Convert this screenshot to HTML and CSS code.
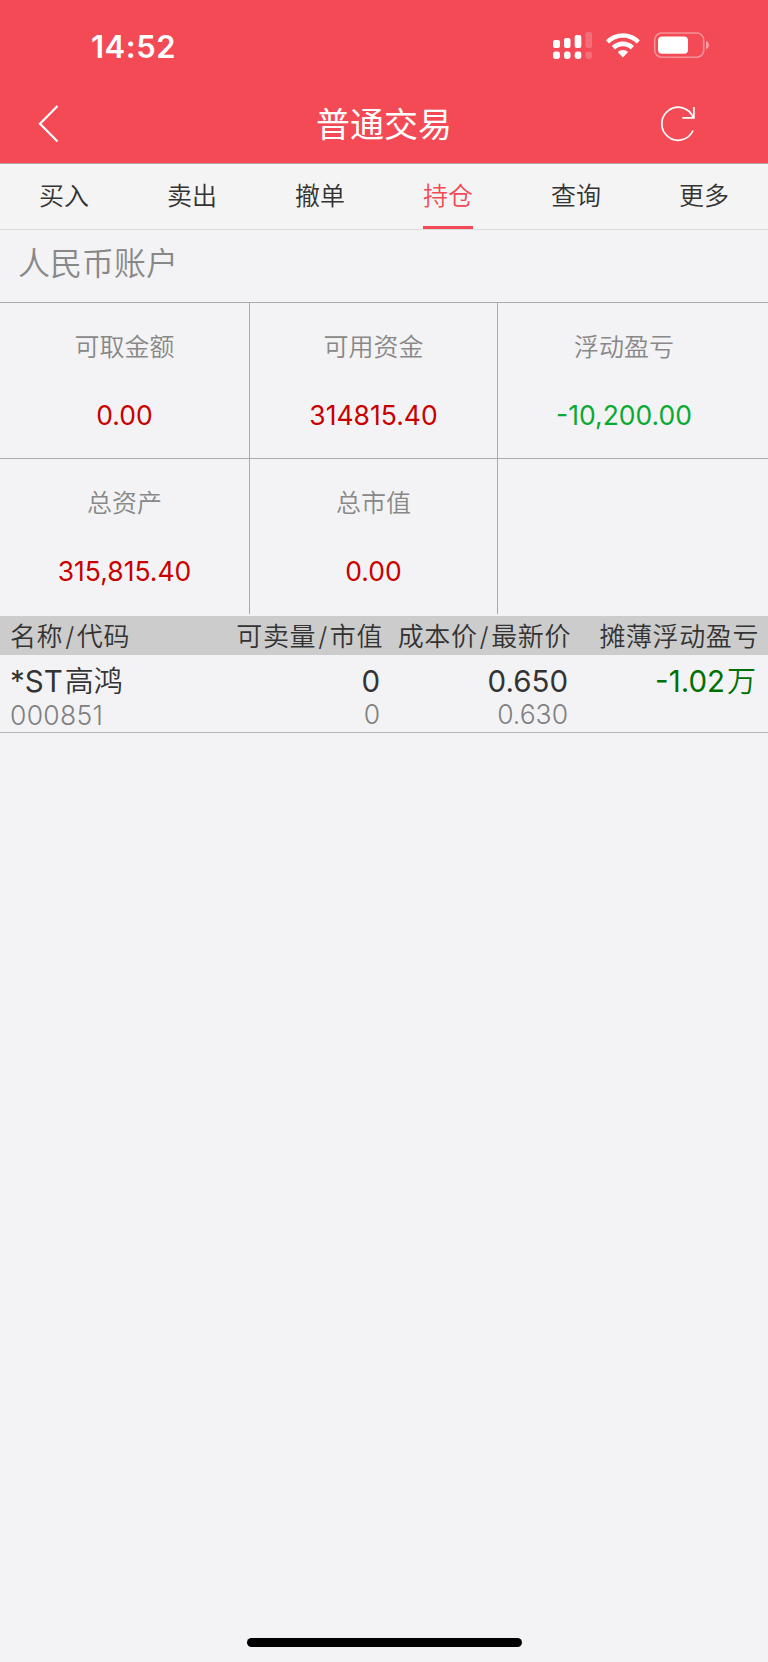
FILE: index.html
```html
<!DOCTYPE html>
<html lang="zh-CN">
<head>
    <meta charset="UTF-8">
    <meta name="viewport" content="width=device-width, initial-scale=1.0">
    <title>普通交易</title>
    <link rel="stylesheet" href="styles.css">
</head>
<body>
    <div class="page">
        <header class="header">
            <div class="status-bar">
                <span class="time">14:52</span>
                <svg class="status-icons" width="160" height="30" viewBox="0 0 160 30" fill="#fff">
                    <!-- signal -->
                    <rect x="1" y="10" width="7" height="8" rx="2"/>
                    <rect x="12" y="8" width="6.5" height="10" rx="2"/>
                    <rect x="22.7" y="5" width="6.6" height="13" rx="2"/>
                    <rect x="33.4" y="2" width="6.6" height="16" rx="2" opacity=".2"/>
                    <rect x="1" y="21.5" width="7" height="7.5" rx="2.4"/>
                    <rect x="12" y="21.5" width="6.5" height="7.5" rx="2.4"/>
                    <rect x="22.7" y="21.5" width="6.6" height="7.5" rx="2.4"/>
                    <rect x="33.4" y="21.5" width="6.6" height="7.5" rx="2.4" opacity=".2"/>
                    <!-- wifi -->
                    <path d="M53.9 10.2a24.3 24.3 0 0 1 34 0l-3.2 3.3a19.6 19.6 0 0 0-27.6 0z"/>
                    <path d="M59.8 16.1a15.8 15.8 0 0 1 22.2 0l-3.3 3.3a11.2 11.2 0 0 0-15.6 0z"/>
                    <path d="M65.7 22a7.6 7.6 0 0 1 10.4 0l-5.2 5.6z"/>
                    <!-- battery -->
                    <rect x="102.7" y="3" width="49" height="24.2" rx="7" fill="none" stroke="#fff" stroke-width="1.6" opacity=".4"/>
                    <rect x="106" y="6.6" width="30" height="17.2" rx="4"/>
                    <path d="M154 11c4 1.500 4 6.700 0 8.200z" opacity=".45"/>
                </svg>
            </div>
            <div class="nav-bar">
                <svg class="icon-back" width="24" height="40" viewBox="0 0 24 40" fill="none" stroke="#fff" stroke-width="2.2">
                    <path d="M20.500 2L3 19.800 20.500 37.500"/>
                </svg>
                <h1 class="title">普通交易</h1>
                <svg class="icon-refresh" width="38" height="38" viewBox="0 0 38 38" fill="none" stroke="#fff" stroke-width="1.7">
                    <path d="M34 25.500A16.300 16.500 0 1 1 34.200 12.500M34.900 2V12.800H23.300"/>
                </svg>
            </div>
        </header>

        <nav class="tabs">
            <a class="tab"><span>买入</span></a>
            <a class="tab"><span>卖出</span></a>
            <a class="tab"><span>撤单</span></a>
            <a class="tab active"><span>持仓</span></a>
            <a class="tab"><span>查询</span></a>
            <a class="tab"><span>更多</span></a>
        </nav>

        <h2 class="account">人民币账户</h2>

        <section class="summary">
            <div class="cell">
                <div class="label">可取金额</div>
                <div class="value">0.00</div>
            </div>
            <div class="cell">
                <div class="label">可用资金</div>
                <div class="value">314815.40</div>
            </div>
            <div class="cell">
                <div class="label">浮动盈亏</div>
                <div class="value down">-10,200.00</div>
            </div>
            <div class="cell">
                <div class="label">总资产</div>
                <div class="value">315,815.40</div>
            </div>
            <div class="cell">
                <div class="label">总市值</div>
                <div class="value">0.00</div>
            </div>
            <div class="cell"></div>
        </section>

        <section class="holdings">
            <div class="row head">
                <span>名称<i>/</i>代码</span>
                <span>可卖量<i>/</i>市值</span>
                <span>成本价<i>/</i>最新价</span>
                <span>摊薄浮动盈亏</span>
            </div>
            <div class="row stock">
                <div>
                    <p class="main">*ST<b>高鸿</b></p>
                    <p class="sub code">000851</p>
                </div>
                <div>
                    <p class="main">0</p>
                    <p class="sub">0</p>
                </div>
                <div>
                    <p class="main">0.650</p>
                    <p class="sub">0.630</p>
                </div>
                <div>
                    <p class="main loss">-1.02<b>万</b></p>
                </div>
            </div>
        </section>

        <div class="home-indicator"></div>
    </div>
</body>
</html>
```
FILE: styles.css
```css
* {
    box-sizing: border-box;
}

body {
    margin: 0;
    background-color: #f3f3f5;
    color: #333;
    font-family: Inter, "Noto Sans CJK SC", sans-serif;
}

h1, h2, p {
    margin: 0;
    font-weight: 400;
}

.page {
    display: flex;
    flex-direction: column;
    width: 768px;
    height: 1662px;
    overflow: hidden;
}

/* header */
.header {
    height: 164px;
    background-color: #f34a56;
    border-bottom: 1px solid #b5a5a7;
    color: #fff;
}

.status-bar {
    display: flex;
    justify-content: space-between;
    height: 84px;
    padding: 30px 56px 0 91px;
}

.time {
    font-size: 31px;
    font-weight: 600;
    line-height: 33px;
    letter-spacing: 0.5px;
}

.nav-bar {
    display: flex;
    justify-content: space-between;
    align-items: center;
    height: 79px;
    padding: 0 71px 0 37px;
}

.title {
    margin: 2px 0 0 48px;
    font-size: 34px;
    line-height: 50px;
}

/* tabs */
.tabs {
    display: flex;
    height: 66px;
    background-color: #f4f4f4;
    border-bottom: 1px solid #dadadc;
}

.tab {
    display: flex;
    flex: 1;
    justify-content: center;
    font-size: 25px;
    font-weight: 350;
    line-height: 64px;
}

.tab span {
    height: 65px;
}

.tab.active {
    color: #f34a56;
}

.tab.active span {
    border-bottom: 3px solid #f34a56;
}

.account {
    height: 72px;
    padding-left: 18px;
    font-size: 32px;
    font-weight: 350;
    line-height: 67px;
    color: #888;
}

/* summary grid */
.summary {
    display: grid;
    grid-template-columns: 250px 248px 270px;
    grid-template-rows: 156px 156px;
    height: 314px;
}

.cell {
    border-top: 1px solid #aaaaad;
    border-right: 1px solid #aaaaad;
    text-align: center;
}

.cell:nth-child(3n) {
    padding-right: 18px;
    border-right: none;
}

.label {
    margin-top: 26px;
    font-size: 25px;
    font-weight: 350;
    line-height: 37px;
    color: #888;
}

.value {
    margin-top: 30px;
    font-size: 26.5px;
    line-height: 38px;
    color: #c80000;
}

.value.down {
    color: #0aaa32;
}

/* holdings */
.row {
    display: grid;
    grid-template-columns: 1fr 188px 188px 188px;
    padding: 0 10px;
    text-align: right;
}

.row > :first-child {
    text-align: left;
}

.head {
    height: 39px;
    padding-right: 9px;
    background-color: #ccc;
    font-size: 26px;
    font-weight: 350;
    line-height: 41px;
    letter-spacing: 0.6px;
    white-space: nowrap;
}

.head i {
    margin: 0 2px;
    font-style: normal;
}

.stock {
    height: 78px;
    padding-right: 12px;
    padding-top: 7px;
    border-bottom: 1px solid #b5b5bb;
}

.main {
    font-size: 29.5px;
    line-height: 38px;
}

.main b {
    margin-left: 2px;
    font-size: 29px;
    font-weight: 350;
}

.main.loss {
    color: #007000;
}

.sub {
    font-size: 26.5px;
    font-weight: 350;
    line-height: 28px;
    color: #808080;
}

.sub.code {
    letter-spacing: 0.3px;
}

.home-indicator {
    width: 275px;
    height: 9px;
    margin: auto auto 15px 247px;
    border-radius: 5px;
    background-color: #000;
}
```
